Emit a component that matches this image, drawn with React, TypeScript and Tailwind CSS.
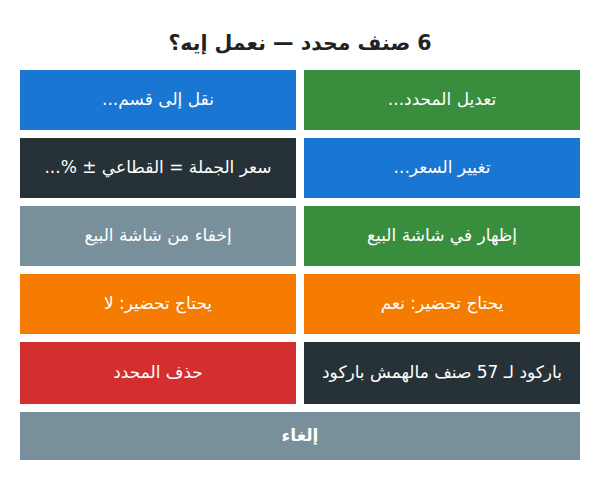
import React from 'react';

type Action = { label: string; color: string };

// order is RTL: first of each pair sits on the right
const actions: Action[] = [
  { label: 'تعديل المحدد...', color: 'bg-[#388e3c]' },
  { label: 'نقل إلى قسم...', color: 'bg-[#1976d2]' },
  { label: 'تغيير السعر...', color: 'bg-[#1976d2]' },
  { label: 'سعر الجملة = القطاعي ± %...', color: 'bg-[#263238]' },
  { label: 'إظهار في شاشة البيع', color: 'bg-[#388e3c]' },
  { label: 'إخفاء من شاشة البيع', color: 'bg-[#78909c]' },
  { label: 'يحتاج تحضير: نعم', color: 'bg-[#f57c00]' },
  { label: 'يحتاج تحضير: لا', color: 'bg-[#f57c00]' },
  { label: 'باركود لـ 57 صنف مالهمش باركود', color: 'bg-[#263238]' },
  { label: 'حذف المحدد', color: 'bg-[#d32f2f]' },
];

const App: React.FC = () => {
  return (
    <div
      dir="rtl"
      className="w-[600px] h-[480px] bg-white px-5 pt-[28px]"
      style={{ fontFamily: '"DejaVu Sans", sans-serif' }}
    >
      <h2 className="text-center text-[20.5px] leading-[30px] font-bold text-[#222] mb-3">
        6 صنف محدد — نعمل إيه؟
      </h2>

      <div className="grid grid-cols-2 gap-2">
        {actions.map((a, i) => (
          <button
            key={i}
            className={`${a.color} ${i >= 8 ? 'h-[62px]' : 'h-[60px]'} text-white text-[17px] flex items-center justify-center`}
          >
            {a.label}
          </button>
        ))}
        <button className="col-span-2 h-[48px] bg-[#78909c] text-white text-[17px] font-bold flex items-center justify-center">
          إلغاء
        </button>
      </div>
    </div>
  );
};

export default App;
